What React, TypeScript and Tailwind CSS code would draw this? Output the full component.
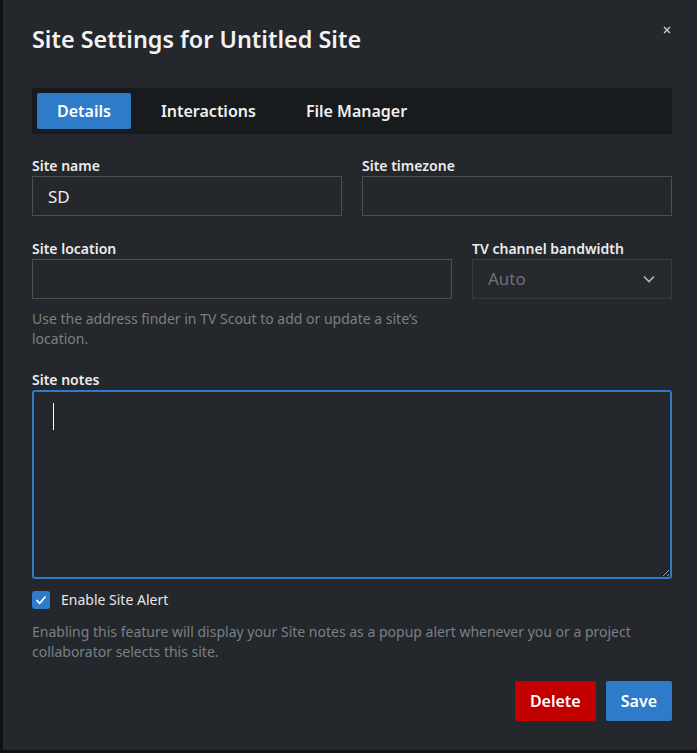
import { useState } from "react";

const tabs = ["Details", "Interactions", "File Manager"];

function Label({ children }: { children: React.ReactNode }) {
  return <label className="block text-[14px] leading-[20px] font-semibold text-[#ececec]">{children}</label>;
}

function TextField({ label, value }: { label: string; value?: string }) {
  return (
    <div>
      <Label>{label}</Label>
      <input
        defaultValue={value}
        className="block h-[40px] w-full border border-[#4b4f53] bg-transparent px-[15px] text-[17px] text-[#ededed] outline-none"
      />
    </div>
  );
}

export default function App() {
  const [tab, setTab] = useState("Details");
  const [alert, setAlert] = useState(true);

  return (
    <div className="flex h-[753px] w-[697px] overflow-hidden bg-[#0f1113] font-['Noto_Sans',sans-serif]">
      <div className="mb-[3px] ml-[3px] flex-1 bg-[#24272b] pt-[23px] pr-[25px] pl-[29px]">
        <header className="flex items-start justify-between">
          <h1 className="text-[23.4px] leading-[32px] font-semibold text-[#f2f2f2]">Site Settings for Untitled Site</h1>
          <button className="mt-[3px] mr-[1px] flex h-[8px] w-[8px] items-center justify-center text-[#cfcfcf]">
            <svg width="8" height="8" viewBox="0 0 8 8" fill="none" stroke="currentColor" strokeWidth="1.3">
              <path d="M1 1l6 6M7 1L1 7" />
            </svg>
          </button>
        </header>

        <nav className="mt-[33px] flex gap-[10px] bg-[#181b1e] p-[5px]">
          {tabs.map((t) => (
            <button
              key={t}
              onClick={() => setTab(t)}
              className={
                t === tab
                  ? "h-[36px] rounded-[2px] bg-[#2e7cc9] px-[20px] text-[16px] font-semibold text-white"
                  : "h-[36px] rounded-[2px] px-[20px] text-[16px] font-semibold text-[#f0f0f0]"
              }
            >
              {t}
            </button>
          ))}
        </nav>

        <div className="mt-[22px] grid grid-cols-2 gap-x-[20px]">
          <TextField label="Site name" value="SD" />
          <TextField label="Site timezone" />
        </div>

        <div className="mt-[23px] grid grid-cols-[420px_200px] gap-x-[20px]">
          <div>
            <TextField label="Site location" />
            <p className="mt-[10px] text-[14px] leading-[20px] text-[#7b8085]">
              Use the address finder in TV Scout to add or update a site’s location.
            </p>
          </div>
          <div>
            <Label>TV channel bandwidth</Label>
            <div className="flex h-[40px] items-center justify-between border border-[#383c40] bg-[#26292d] pr-[16px] pl-[15px]">
              <span className="text-[17px] text-[#6e7378]">Auto</span>
              <svg width="12" height="8" viewBox="0 0 12 8" fill="none" stroke="#b4b7ba" strokeWidth="1.6">
                <path d="M1 1.5l5 5 5-5" />
              </svg>
            </div>
          </div>
        </div>

        <div className="mt-[21px]">
          <Label>Site notes</Label>
          <div className="relative">
            <textarea className="block h-[189px] w-full resize-y rounded-[3px] border-2 border-[#2d7bca] bg-transparent px-[19px] py-[12px] text-[17px] text-[#ededed] outline-none [color-scheme:dark]" />
            <span className="absolute top-[13px] left-[21px] h-[27px] w-px bg-white" />
          </div>
        </div>

        <label className="mt-[11px] flex items-center gap-[11px]">
          <button
            onClick={() => setAlert(!alert)}
            className={
              alert
                ? "flex h-[18px] w-[18px] items-center justify-center rounded-[3px] bg-[#2d7bca]"
                : "flex h-[18px] w-[18px] items-center justify-center rounded-[3px] border border-[#4b4f53]"
            }
          >
            {alert && (
              <svg width="12" height="10" viewBox="0 0 12 10" fill="none" stroke="white" strokeWidth="1.8">
                <path d="M1.5 5.2l3.2 3.1L10.5 1.5" />
              </svg>
            )}
          </button>
          <span className="text-[14px] leading-[20px] text-[#e6e6e6]">Enable Site Alert</span>
        </label>

        <p className="mt-[12px] text-[14px] leading-[20px] text-[#7b8085]">
          Enabling this feature will display your Site notes as a popup alert whenever you or a project collaborator
          selects this site.
        </p>

        <div className="mt-[19px] flex justify-end gap-[10px]">
          <button className="h-[40px] rounded-[2px] bg-[#c20000] px-[15px] text-[16px] font-semibold text-white">Delete</button>
          <button className="h-[40px] rounded-[2px] bg-[#2e7cc9] px-[15px] text-[16px] font-semibold text-white">Save</button>
        </div>
      </div>
    </div>
  );
}
